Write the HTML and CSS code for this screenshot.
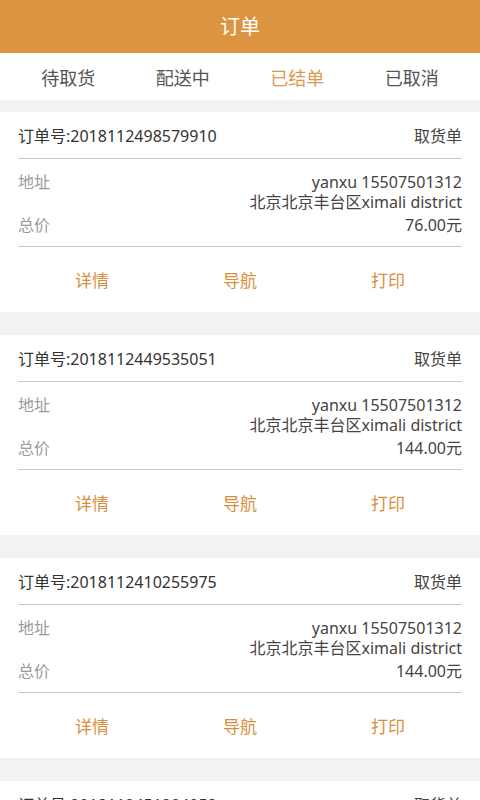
FILE: index.html
```html
<!DOCTYPE html>
<html lang="zh-CN">
  <head>
    <meta charset="UTF-8" />
    <meta name="viewport" content="width=device-width, initial-scale=1.0" />
    <title>订单</title>
    <link rel="stylesheet" href="styles.css">
  </head>
  <body>
    <header class="topbar">订单</header>

    <nav class="tabs">
      <span class="tab">待取货</span>
      <span class="tab">配送中</span>
      <span class="tab active">已结单</span>
      <span class="tab">已取消</span>
    </nav>

    <div class="orders">
      <div class="card">
        <div class="card-head">
          <span class="order-no">订单号:2018112498579910</span>
          <span class="order-type">取货单</span>
        </div>
        <div class="card-body">
          <div class="row">
            <span class="label">地址</span>
            <span class="value">yanxu 15507501312<br>北京北京丰台区ximali district</span>
          </div>
          <div class="row">
            <span class="label">总价</span>
            <span class="value">76.00元</span>
          </div>
        </div>
        <div class="card-actions">
          <button class="action">详情</button>
          <button class="action">导航</button>
          <button class="action">打印</button>
        </div>
      </div>

      <div class="card">
        <div class="card-head">
          <span class="order-no">订单号:2018112449535051</span>
          <span class="order-type">取货单</span>
        </div>
        <div class="card-body">
          <div class="row">
            <span class="label">地址</span>
            <span class="value">yanxu 15507501312<br>北京北京丰台区ximali district</span>
          </div>
          <div class="row">
            <span class="label">总价</span>
            <span class="value">144.00元</span>
          </div>
        </div>
        <div class="card-actions">
          <button class="action">详情</button>
          <button class="action">导航</button>
          <button class="action">打印</button>
        </div>
      </div>

      <div class="card">
        <div class="card-head">
          <span class="order-no">订单号:2018112410255975</span>
          <span class="order-type">取货单</span>
        </div>
        <div class="card-body">
          <div class="row">
            <span class="label">地址</span>
            <span class="value">yanxu 15507501312<br>北京北京丰台区ximali district</span>
          </div>
          <div class="row">
            <span class="label">总价</span>
            <span class="value">144.00元</span>
          </div>
        </div>
        <div class="card-actions">
          <button class="action">详情</button>
          <button class="action">导航</button>
          <button class="action">打印</button>
        </div>
      </div>

      <div class="card">
        <div class="card-head">
          <span class="order-no">订单号:2018112451204053</span>
          <span class="order-type">取货单</span>
        </div>
        <div class="card-body">
          <div class="row">
            <span class="label">地址</span>
            <span class="value">yanxu 15507501312<br>北京北京丰台区ximali district</span>
          </div>
          <div class="row">
            <span class="label">总价</span>
            <span class="value">144.00元</span>
          </div>
        </div>
        <div class="card-actions">
          <button class="action">详情</button>
          <button class="action">导航</button>
          <button class="action">打印</button>
        </div>
      </div>
    </div>
  </body>
</html>
```

FILE: styles.css
```css
body {
  font-family: "Noto Sans", "Noto Sans CJK SC", sans-serif;
  margin: 0;
  padding: 0;
  background-color: #f2f2f2;
}

.topbar {
  height: 53px;
  line-height: 53px;
  text-align: center;
  font-size: 20px;
  color: #fff;
  background-color: #dc9441;
}

.tabs {
  display: flex;
  height: 47px;
  align-items: center;
  padding: 0 11px;
  background-color: #fff;
}

.tab {
  flex: 1;
  text-align: center;
  font-size: 18px;
  color: #555;
}

.tab.active {
  color: #d99a4e;
}

.orders {
  padding-top: 12px;
}

.card {
  height: 200px;
  margin-bottom: 23px;
  padding: 0 18px;
  background-color: #fff;
}

.card-head {
  display: flex;
  justify-content: space-between;
  align-items: center;
  height: 46px;
  font-size: 16px;
  border-bottom: 1px solid #c9c9c9;
}

.order-no {
  color: #333;
}

.order-type {
  color: #444;
}

.card-body {
  display: flex;
  flex-direction: column;
  gap: 3px;
  padding: 13px 0 11px;
  border-bottom: 1px solid #c9c9c9;
}

.row {
  display: flex;
  justify-content: space-between;
  font-size: 16px;
  line-height: 20px;
}

.label {
  color: #9a9a9a;
}

.value {
  text-align: right;
  color: #444;
}

.card-actions {
  display: flex;
  height: 64px;
  align-items: center;
}

.action {
  flex: 1;
  background: none;
  border: none;
  padding: 0;
  font-family: inherit;
  font-size: 17px;
  color: #d88f3d;
  cursor: pointer;
}
```
